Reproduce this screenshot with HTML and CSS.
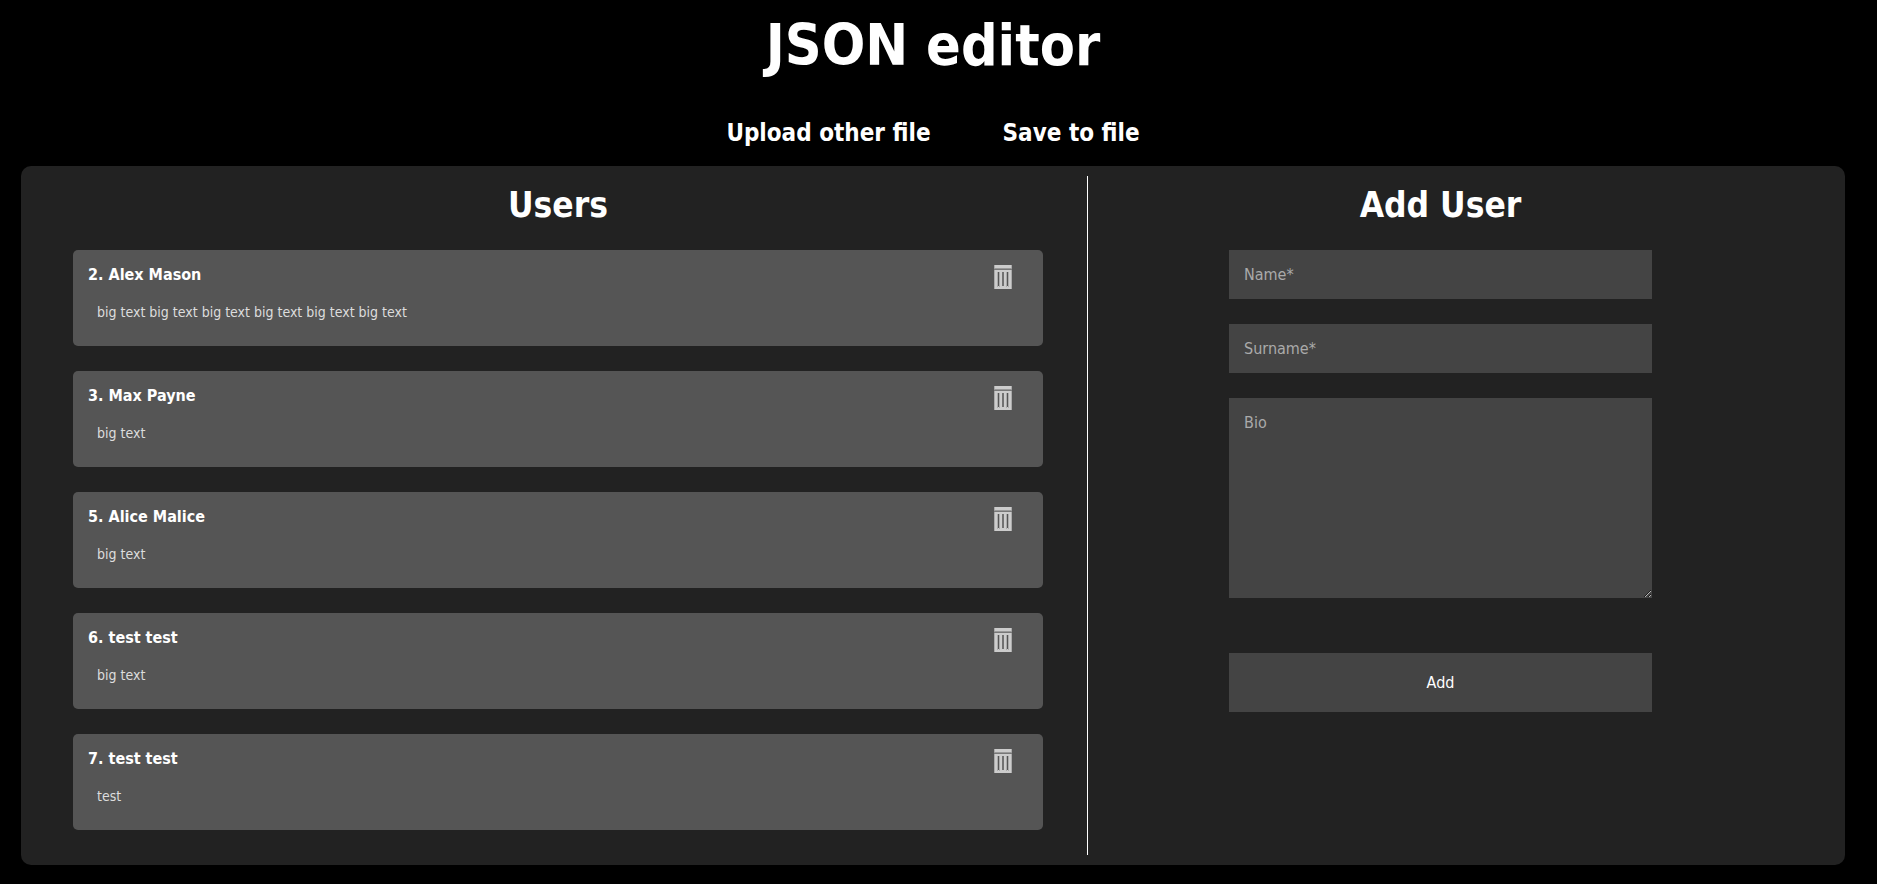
FILE: index.html
```html
<!DOCTYPE html>
<html lang="en">
<head>
<meta charset="utf-8">
<title>JSON editor</title>
<link rel="stylesheet" href="styles.css">
</head>
<body>
<svg class="sprite" aria-hidden="true">
  <symbol id="trash" viewBox="0 0 18 24">
    <path fill="#ccc" d="M0 0h18v24H0z"/>
    <path fill="#999" d="M0 3h18v1H0z"/>
    <path fill="#777" d="M0 4h18v1H0z"/>
    <path fill="#aaa" d="M0 0h1v3H0zM17 0h1v3h-1zM0 5h1v19H0zM17 5h1v19h-1zM3 7h1v15H3zM5 7h1v15H5zM12 7h1v15h-1zM14 7h1v15h-1z"/>
    <path fill="#555" d="M4 7h1v14H4zM13 7h1v14h-1z"/>
    <path fill="#717171" d="M8 7h2v14H8z"/>
  </symbol>
</svg>
<header class="header">
  <h1 class="title">JSON editor</h1>
  <nav class="actions">
    <button class="action" type="button">Upload other file</button>
    <button class="action" type="button">Save to file</button>
  </nav>
</header>
<main class="panel">
  <section class="users">
    <h2 class="heading">Users</h2>
    <ul class="list">
      <li class="card">
        <div><h3 class="name">2. Alex Mason</h3><p class="bio">big text big text big text big text big text big text</p></div>
        <button class="delete" type="button" aria-label="Delete Alex Mason"><svg class="icon"><use href="#trash"/></svg></button>
      </li>
      <li class="card">
        <div><h3 class="name">3. Max Payne</h3><p class="bio">big text</p></div>
        <button class="delete" type="button" aria-label="Delete Max Payne"><svg class="icon"><use href="#trash"/></svg></button>
      </li>
      <li class="card">
        <div><h3 class="name">5. Alice Malice</h3><p class="bio">big text</p></div>
        <button class="delete" type="button" aria-label="Delete Alice Malice"><svg class="icon"><use href="#trash"/></svg></button>
      </li>
      <li class="card">
        <div><h3 class="name">6. test test</h3><p class="bio">big text</p></div>
        <button class="delete" type="button" aria-label="Delete user 6"><svg class="icon"><use href="#trash"/></svg></button>
      </li>
      <li class="card">
        <div><h3 class="name">7. test test</h3><p class="bio">test</p></div>
        <button class="delete" type="button" aria-label="Delete user 7"><svg class="icon"><use href="#trash"/></svg></button>
      </li>
    </ul>
  </section>
  <section class="add">
    <h2 class="heading">Add User</h2>
    <form class="form">
      <input class="field" type="text" placeholder="Name*" aria-label="Name" required>
      <input class="field" type="text" placeholder="Surname*" aria-label="Surname" required>
      <textarea class="field area" placeholder="Bio" aria-label="Bio"></textarea>
      <button class="submit" type="submit">Add</button>
    </form>
  </section>
</main>
</body>
</html>
```
FILE: styles.css
```css
* { box-sizing: border-box; margin: 0; padding: 0; }

body {
  background: #000;
  color: #fff;
  font-family: Tahoma, "DejaVu Sans Condensed", "DejaVu Sans", sans-serif;
  font-size: 16px;
  padding: 10px 32px 16px 21px;
}

button, input, textarea { font: inherit; color: inherit; border: 0; border-radius: 0; }
button { cursor: pointer; }

.sprite { display: none; }

.header { display: flex; flex-direction: column; align-items: center; }

.title { font-size: 57px; line-height: 70px; }

.actions { display: flex; gap: 72px; padding: 37px 0 17px; }

.action { background: none; font-size: 24px; font-weight: bold; line-height: 32px; }

.panel {
  display: grid;
  grid-template-columns: 203fr 141fr;
  padding: 10px 52px;
  background: #222;
  border-radius: 10px;
}

.users { padding: 0 44px 25px 0; border-right: 1px solid #fff; }

.heading { font-size: 35px; line-height: 40px; text-align: center; padding: 9px 0 25px; }

.list { list-style: none; display: grid; gap: 25px; }

.card {
  display: flex;
  justify-content: space-between;
  align-items: flex-start;
  min-height: 96px;
  padding: 15px 31px 15px 15px;
  background: #555;
  border-radius: 5px;
}

.name { font-size: 16px; line-height: 20px; }

.bio { font-size: 14px; line-height: 18px; padding: 18px 9px 0; color: #ddd; }

.delete { background: none; display: block; }

.icon { display: block; width: 18px; height: 24px; }

.form { display: flex; flex-direction: column; gap: 25px; width: 60%; margin: 0 auto; }

.field { width: 100%; height: 49px; padding: 15px; background: #444; line-height: 19px; }

.field::placeholder { color: #aaa; opacity: 1; }

.area { height: 200px; resize: vertical; display: block; }

.submit { height: 59px; margin-top: 30px; background: #444; }
```
